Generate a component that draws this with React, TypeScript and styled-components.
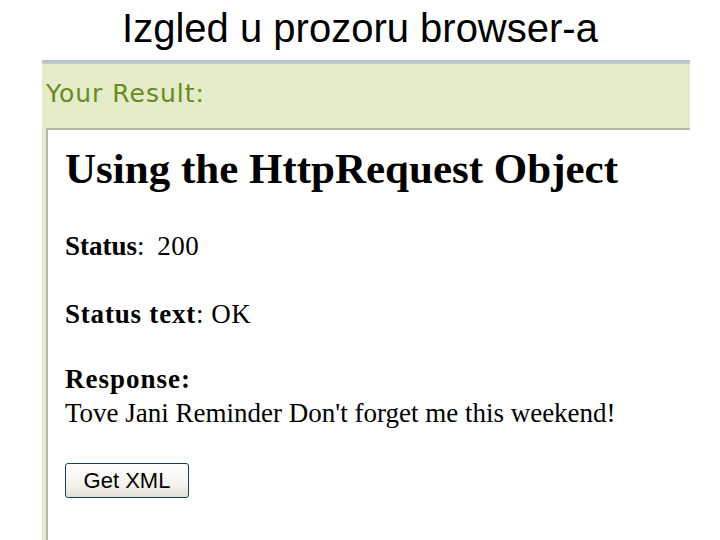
import React from 'react';
import styled, {createGlobalStyle} from 'styled-components';

const GlobalStyle = createGlobalStyle`
  html, body {
    margin: 0;
    padding: 0;
    background-color: #ffffff;
  }
`

const Page = styled.div`
  width: 720px;
  height: 540px;
  overflow: hidden;
  display: flex;
  flex-direction: column;
  background-color: #ffffff;
`

const Title = styled.h1`
  margin: 0;
  height: 60px;
  padding-top: 2px;
  box-sizing: border-box;
  font-family: "Liberation Sans", Arial, sans-serif;
  font-weight: normal;
  font-size: 40px;
  line-height: 52px;
  color: #000000;
  text-align: center;
`

const Panel = styled.div`
  margin-left: 42px;
  width: 648px;
  flex: 1;
  display: flex;
  flex-direction: column;
  border-top: 2px solid #b7bee6;
`

const Header = styled.div`
  height: 66px;
  box-sizing: border-box;
  padding: 15px 0 0 4px;
  background-color: #e4ecca;
  border-top: 2px solid #c6cbbd;
  font-family: "DejaVu Sans", Verdana, sans-serif;
  font-size: 25px;
  line-height: 30px;
  letter-spacing: 1px;
  color: #6a8a22;
`

const Body = styled.div`
  flex: 1;
  display: flex;
  padding-left: 4px;
  background-color: #e4ecca;
`

const Content = styled.div`
  flex: 1;
  background-color: #ffffff;
  border-top: 2px solid #b4b6ac;
  border-left: 2px solid #b4b6ac;
  padding-left: 17px;
  font-family: "Liberation Serif", "Times New Roman", serif;
  color: #000000;
`

const Heading = styled.h2`
  margin: 14px 0 0;
  font-size: 43px;
  line-height: 50px;
  font-weight: bold;
`

const Field = styled.p<{ $gap: number }>`
  margin: ${p => p.$gap}px 0 0;
  font-size: 27px;
  line-height: 32px;
`

const Label = styled.b<{ $spacing?: number }>`
  font-weight: bold;
  letter-spacing: ${p => p.$spacing ?? 0}px;
`

const Value = styled.span<{ $indent: number }>`
  margin-left: ${p => p.$indent}px;
  letter-spacing: 0.5px;
`

const Button = styled.button`
  margin-top: 34px;
  width: 124px;
  height: 35px;
  padding: 0;
  border: 1px solid #1f3b5c;
  border-radius: 3px;
  background: linear-gradient(#ffffff 0%, #f4f3ee 60%, #e2e0d6 100%);
  font-family: "Liberation Sans", Arial, sans-serif;
  font-size: 22px;
  color: #000000;
  cursor: pointer;
`

const App: React.FC = () => {
    return (
        <Page>
            <GlobalStyle/>
            <Title>Izgled u prozoru browser-a</Title>
            <Panel>
                <Header>Your Result:</Header>
                <Body>
                    <Content>
                        <Heading>Using the HttpRequest Object</Heading>
                        <Field $gap={36}><Label>Status</Label>: <Value $indent={6}>200</Value></Field>
                        <Field $gap={36}><Label $spacing={0.8}>Status text</Label>: <Value $indent={1}>OK</Value></Field>
                        <Field $gap={33}><Label $spacing={1}>Response:</Label></Field>
                        <Field $gap={2}>Tove Jani Reminder Don't forget me this weekend!</Field>
                        <Button>Get XML</Button>
                    </Content>
                </Body>
            </Panel>
        </Page>
    );
}

export default App
